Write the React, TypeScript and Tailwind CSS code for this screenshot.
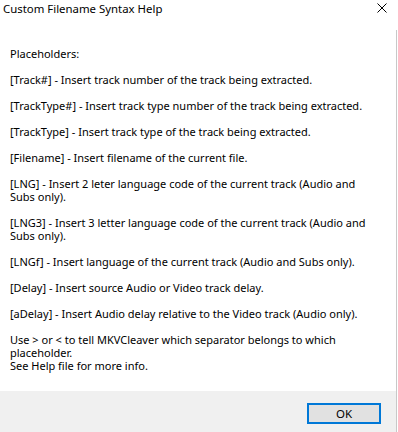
const paragraphs: string[] = [
  "Placeholders:",
  "[Track#] - Insert track number of the track being extracted.",
  "[TrackType#] - Insert track type number of the track being extracted.",
  "[TrackType] - Insert track type of the track being extracted.",
  "[Filename] - Insert filename of the current file.",
  "[LNG] - Insert 2 leter language code of the current track (Audio and\nSubs only).",
  "[LNG3] - Insert 3 letter language code of the current track (Audio and\nSubs only).",
  "[LNGf] - Insert language of the current track (Audio and Subs only).",
  "[Delay] - Insert source Audio or Video track delay.",
  "[aDelay] - Insert Audio delay relative to the Video track (Audio only).",
  "Use > or < to tell MKVCleaver which separator belongs to which\nplaceholder.\nSee Help file for more info.",
];

export default function App() {
  return (
    <div
      className="w-[398px] h-[432px] bg-white flex flex-col text-black overflow-hidden"
      style={{ fontFamily: '"Noto Sans", sans-serif' }}
    >
      {/* Title bar */}
      <div className="h-[30px] flex items-start justify-between shrink-0">
        <span className="pl-[3px] pt-[1px] text-[11.4px] leading-[16px]">Custom Filename Syntax Help</span>
        <svg width="10" height="10" viewBox="0 0 10 10" className="mt-[3px] mr-[11px]">
          <path d="M0.5 0.5 L9.5 9.5 M9.5 0.5 L0.5 9.5" stroke="#000" strokeWidth="1" />
        </svg>
      </div>

      {/* Body */}
      <div className="flex-1 flex flex-col border-r border-[#c8c8c8] w-[397px]">
        <div className="flex-1 pl-[10px] pt-[17px] text-[11px] leading-[13px] flex flex-col gap-[13px]">
          {paragraphs.map((p, i) => (
            <p key={i} className="whitespace-pre">
              {p}
            </p>
          ))}
        </div>
        <div className="h-[41px] bg-[#f0f0f0] flex items-start justify-end shrink-0">
          <button className="mt-[12px] mr-[15px] w-[74px] h-[21px] bg-[#e1e1e1] border-2 border-[#0078d7] text-[11.5px] leading-[17px]">
            OK
          </button>
        </div>
      </div>
    </div>
  );
}
